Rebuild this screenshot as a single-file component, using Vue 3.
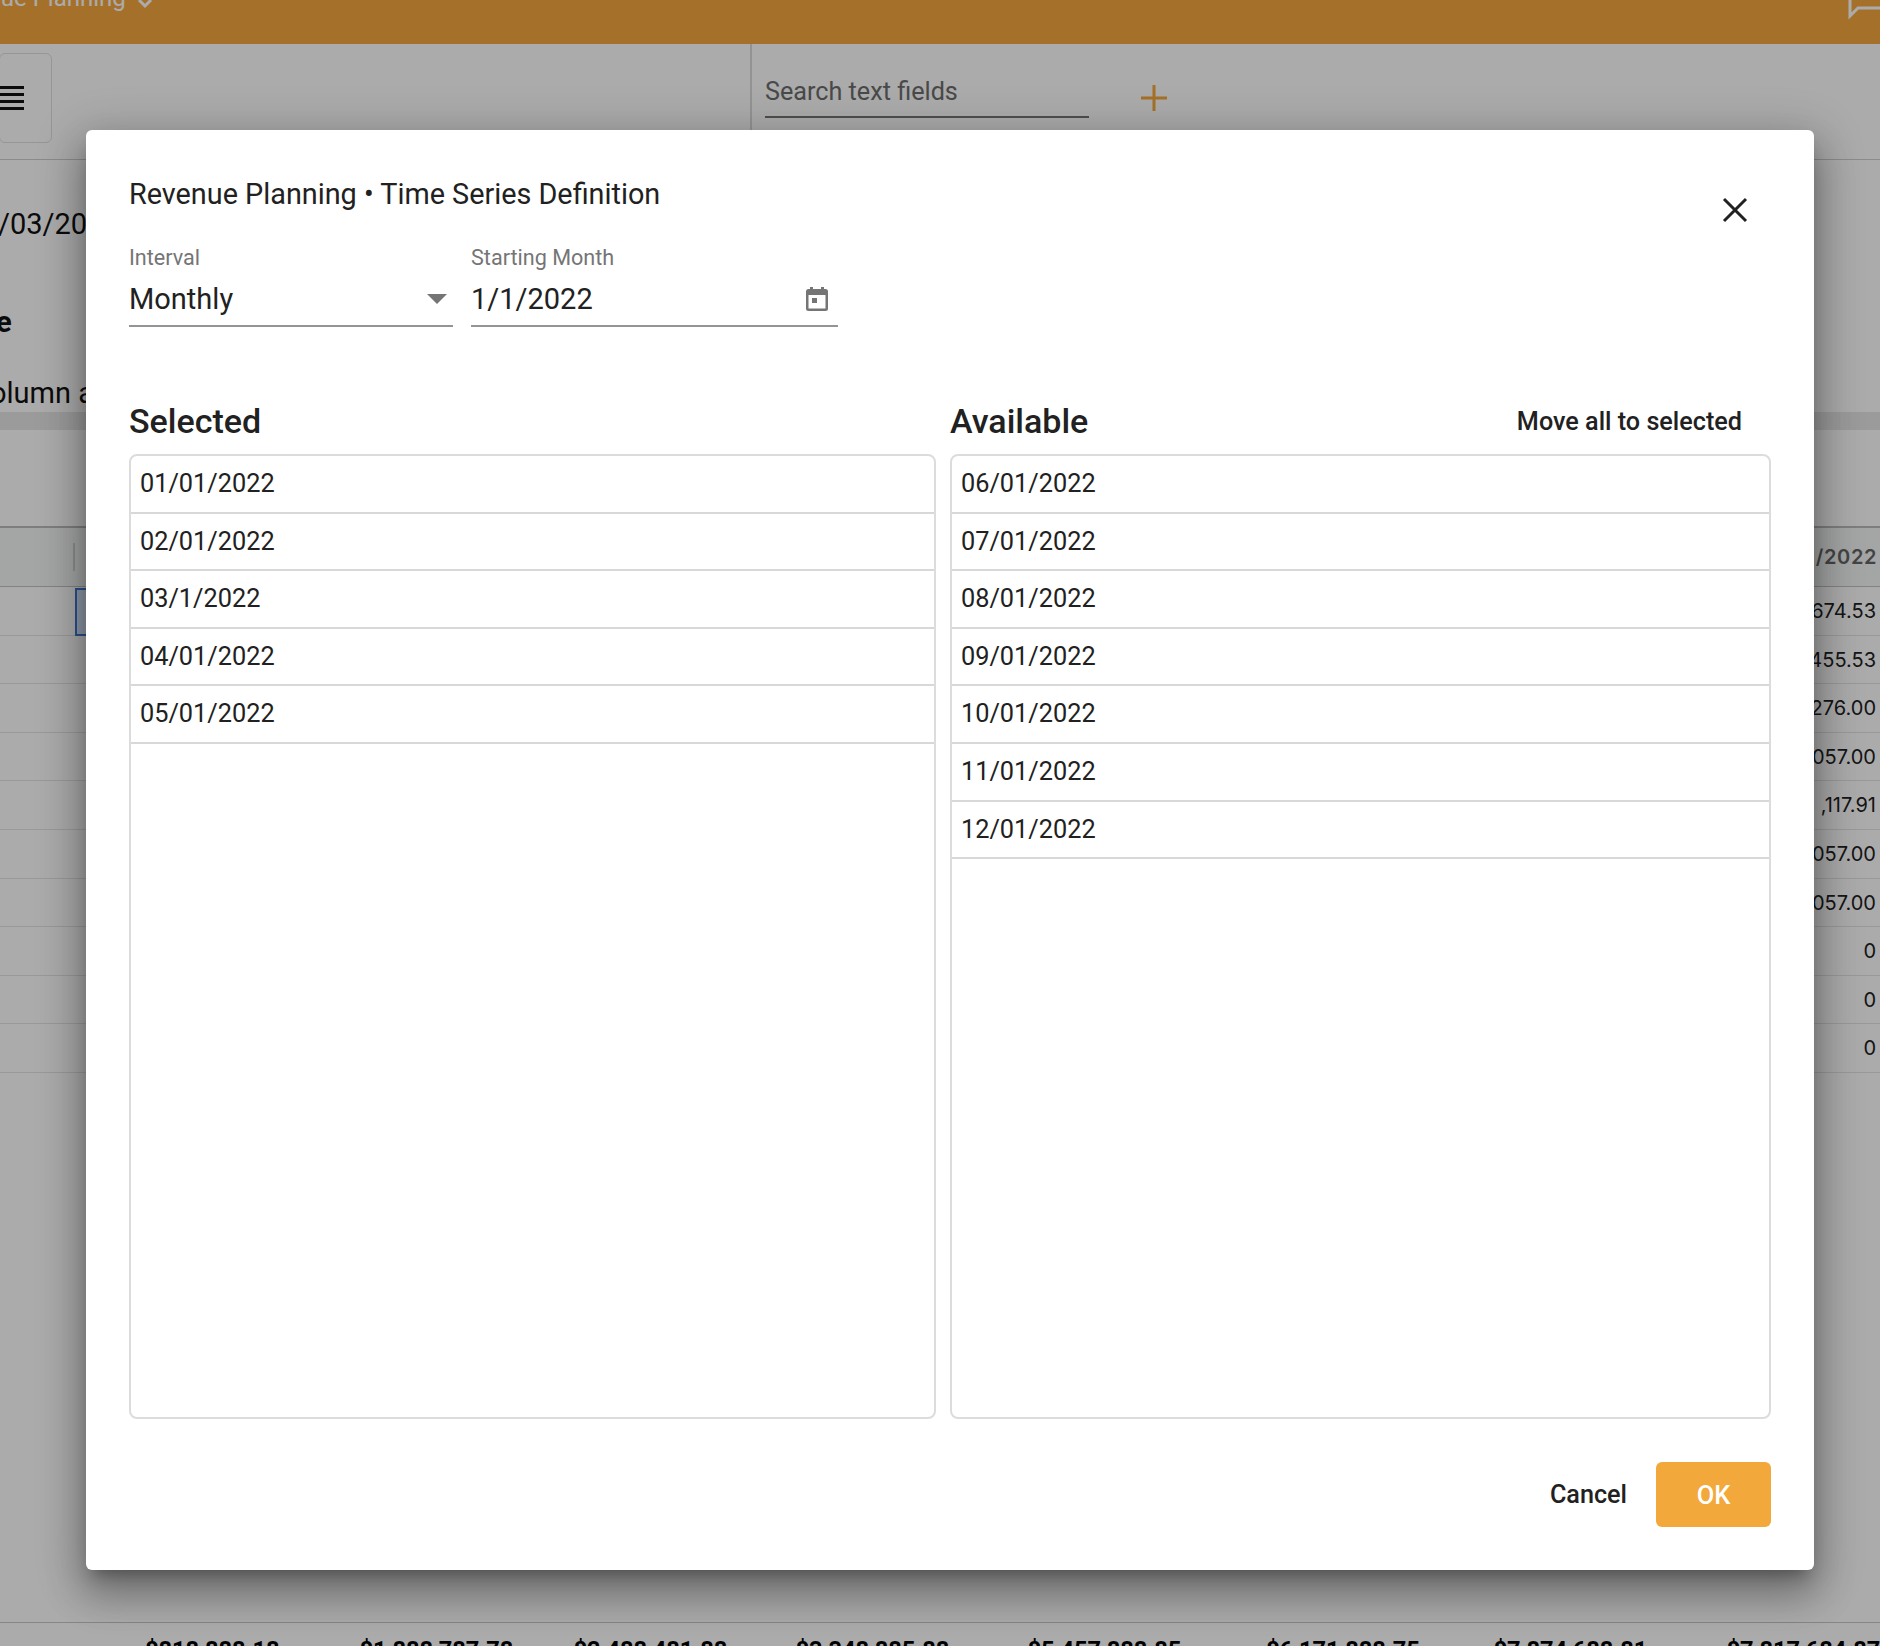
<template>
  <div class="page">
    <header class="topbar">
      <span class="topbar-title">Revenue Planning</span>
      <svg class="topbar-caret" width="16" height="10" viewBox="0 0 16 10"><path d="M2 0l6 6 6-6" fill="none" stroke="currentColor" stroke-width="3" /></svg>
      <svg class="topbar-chat" width="32" height="20" viewBox="0 0 32 20"><path d="M2 0V16L10 8H32" fill="none" stroke="currentColor" stroke-width="3" /></svg>
    </header>

    <div class="toolbar">
      <div class="menu-box">
        <span class="menu-line"></span>
        <span class="menu-line"></span>
        <span class="menu-line"></span>
        <span class="menu-line"></span>
      </div>
      <div class="search">
        <div class="search-field">Search text fields</div>
        <svg class="search-add" width="28" height="28" viewBox="0 0 28 28"><path d="M14 1v26M1 14h26" stroke="#f6a93b" stroke-width="3" /></svg>
      </div>
    </div>

    <div class="summary">
      <div class="summary-date">/03/20</div>
      <div class="summary-name">e</div>
      <div class="summary-column">olumn a</div>
    </div>
    <div class="band"></div>

    <div class="grid">
      <div class="grid-head">
        <span class="grid-sep"></span>
        <span class="grid-date">/2022</span>
      </div>
      <div v-for="(value, i) in gridValues" :key="i" class="grid-row">
        <span v-if="i === 0" class="grid-cell-active"></span>
        <span class="grid-value">{{ value }}</span>
      </div>
    </div>

    <div class="totals">
      <span v-for="total in totals" :key="total.text" class="total" :style="{ width: total.width + 'px' }">{{ total.text }}</span>
    </div>

    <div class="backdrop">
      <section class="dialog">
        <svg class="dialog-close" width="26" height="26" viewBox="0 0 26 26"><path d="M2 2l22 22M24 2L2 24" stroke="#212121" stroke-width="3" /></svg>
        <h2 class="dialog-title">Revenue Planning • Time Series Definition</h2>

        <div class="fields">
          <div class="field field-interval">
            <label class="field-label">Interval</label>
            <div class="field-input">
              <span>Monthly</span>
              <svg class="field-caret" width="20" height="10" viewBox="0 0 20 10"><path d="M0 0h20L10 10z" fill="#757575" /></svg>
            </div>
          </div>
          <div class="field field-month">
            <label class="field-label">Starting Month</label>
            <div class="field-input">
              <span>1/1/2022</span>
              <svg class="field-cal" width="24" height="26" viewBox="0 0 24 26"><path fill="#757575" fill-rule="evenodd" d="M5 1h3v2h8V1h3v2h1.500A2.500 2.500 0 0 1 23 5.500v17a2.500 2.500 0 0 1-2.500 2.500h-17A2.500 2.500 0 0 1 1 22.500v-17A2.500 2.500 0 0 1 3.500 3H5zM3.500 9v13.500h17V9zM7 12h5v5H7z" /></svg>
            </div>
          </div>
        </div>

        <div class="lists">
          <div class="list-col">
            <div class="list-head">
              <h3 class="list-title">Selected</h3>
            </div>
            <ul class="list">
              <li v-for="d in selected" :key="d" class="list-item">{{ d }}</li>
            </ul>
          </div>
          <div class="list-col">
            <div class="list-head">
              <h3 class="list-title">Available</h3>
              <button class="move-all">Move all to selected</button>
            </div>
            <ul class="list">
              <li v-for="d in available" :key="d" class="list-item">{{ d }}</li>
            </ul>
          </div>
        </div>

        <div class="actions">
          <button class="btn-cancel">Cancel</button>
          <button class="btn-ok">OK</button>
        </div>
      </section>
    </div>
  </div>
</template>

<script setup>
const selected = ['01/01/2022', '02/01/2022', '03/1/2022', '04/01/2022', '05/01/2022'];
const available = ['06/01/2022', '07/01/2022', '08/01/2022', '09/01/2022', '10/01/2022', '11/01/2022', '12/01/2022'];
const gridValues = ['674.53', '455.53', '276.00', '057.00', ',117.91', '057.00', '057.00', '0', '0', '0'];
const totals = [
  { text: '$818,888.18', width: 214.5 },
  { text: '$1,888,787.78', width: 214 },
  { text: '$2,488,481.88', width: 222 },
  { text: '$3,348,885.88', width: 232 },
  { text: '$5,457,888.85', width: 238.5 },
  { text: '$6,171,888.75', width: 227.5 },
  { text: '$7,874,688.81', width: 233 },
  { text: '$7,817,684.87', width: 230 }
];
</script>

<style>
html, body { margin: 0; overflow: hidden; background: #fff; }
</style>

<style scoped>
.page {
  position: relative;
  width: 1880px;
  height: 1646px;
  overflow: hidden;
  background: #fff;
  color: #212121;
  font-family: Roboto, "Liberation Sans", sans-serif;
}
.topbar {
  height: 44px;
  background: #f7a93f;
  color: #fff;
  display: flex;
  align-items: flex-start;
  overflow: hidden;
}
.topbar-title {
  margin-left: -64px;
  margin-top: -14px;
  font-size: 24px;
  line-height: 24px;
  white-space: nowrap;
}
.topbar-caret { margin: 0 0 0 11px; }
.topbar-chat { margin: 0 0 0 auto; }
.toolbar {
  height: 115px;
  border-bottom: 1px solid #d0d0d0;
  display: flex;
}
.menu-box {
  width: 53px;
  height: 90px;
  margin: 9px 0 0 -1px;
  border: 1px solid #e0e0e0;
  border-radius: 6px;
  box-sizing: border-box;
  display: flex;
  flex-direction: column;
  justify-content: center;
  gap: 3.5px;
}
.menu-line {
  display: block;
  width: 24px;
  height: 3.5px;
  background: #111;
}
.search {
  margin-left: 698px;
  border-left: 2px solid #dcdcdc;
  padding-left: 13px;
  display: flex;
  align-items: flex-start;
}
.search-field {
  width: 324px;
  height: 43px;
  margin-top: 29px;
  border-bottom: 2px solid #757575;
  font-size: 25.2px;
  line-height: 38px;
  color: #6e6e6e;
  white-space: nowrap;
}
.search-add { margin: 40px 0 0 51px; }
.summary {
  height: 252px;
  font-size: 29px;
  color: #111;
}
.summary-date { padding-top: 47px; line-height: 34px; margin-left: -2px; }
.summary-name { margin-top: 64px; line-height: 34px; font-weight: 700; margin-left: -4px; }
.summary-column { margin-top: 37px; line-height: 34px; margin-left: -10px; white-space: nowrap; }
.band { height: 18px; background: #e8e8e8; }
.grid {
  margin-top: 96px;
  border-top: 2px solid #bdbdbd;
}
.grid-head {
  position: relative;
  height: 58px;
  background: #f5f7f7;
  border-bottom: 1px solid #c4c4c4;
  text-align: right;
  padding-right: 3px;
  line-height: 58px;
  font-size: 20px;
  font-weight: 600;
  letter-spacing: 0.6px;
  color: #666;
  font-family: Inter, "Liberation Sans", sans-serif;
}
.grid-sep {
  position: absolute;
  left: 73px;
  top: 15px;
  width: 2px;
  height: 28px;
  background: #d4d4d4;
}
.grid-row {
  position: relative;
  height: 47.6px;
  border-bottom: 1px solid #e4e4e4;
  text-align: right;
  padding-right: 4px;
  font-size: 20px;
  line-height: 48px;
  color: #222;
  font-family: Inter, "Liberation Sans", sans-serif;
}
.grid-cell-active {
  position: absolute;
  left: 75px;
  top: 1px;
  width: 100px;
  height: 44px;
  background: #d6e6fb;
  border: 2px solid #3d7ad6;
}
.totals {
  position: absolute;
  left: 0;
  right: 0;
  top: 1622px;
  border-top: 1px solid #c8c8c8;
  padding: 13px 0 0 145px;
  display: flex;
  font-size: 23.6px;
  font-weight: 700;
  color: #000;
  white-space: nowrap;
}
.total { flex: none; }
.backdrop {
  position: absolute;
  inset: 0;
  background: rgba(0, 0, 0, 0.33);
  padding: 130px 0 0 86px;
}
.dialog {
  position: relative;
  width: 1728px;
  height: 1440px;
  box-sizing: border-box;
  padding: 44px 43px 43px;
  background: #fff;
  border-radius: 6px;
  display: flex;
  flex-direction: column;
  box-shadow: 0 11px 15px -7px rgba(0, 0, 0, 0.3), 0 24px 38px 3px rgba(0, 0, 0, 0.24), 0 9px 46px 8px rgba(0, 0, 0, 0.18);
}
.dialog-close { position: absolute; right: 66px; top: 67px; }
.dialog-title {
  margin: 0;
  font-size: 28.8px;
  font-weight: 400;
  line-height: 40px;
}
.fields {
  display: flex;
  gap: 18px;
  margin-top: 31px;
}
.field-interval { width: 324px; }
.field-month { width: 367px; }
.field-label {
  display: block;
  font-size: 21.6px;
  line-height: 26px;
  color: #757575;
}
.field-input {
  height: 49px;
  margin-top: 3px;
  display: flex;
  align-items: center;
  justify-content: space-between;
  font-size: 29px;
  line-height: 38px;
  border-bottom: 2px solid #949494;
  padding-bottom: 2px;
}
.field-caret { margin-right: 6px; }
.field-cal { margin-right: 9px; }
.lists {
  flex: 1;
  min-height: 0;
  display: flex;
  gap: 14px;
  margin-top: 70px;
}
.list-col {
  flex: none;
  width: 807px;
  display: flex;
  flex-direction: column;
}
.list-col + .list-col { width: 821px; }
.list-head {
  height: 48px;
  display: flex;
  align-items: center;
  justify-content: space-between;
}
.list-title {
  margin: 0;
  font-size: 34px;
  font-weight: 500;
  line-height: 48px;
}
.move-all {
  margin-right: 29px;
  padding: 0;
  border: 0;
  background: none;
  font: 500 25.2px Roboto, "Liberation Sans", sans-serif;
  color: #212121;
}
.list {
  flex: 1;
  margin: 9px 0 0;
  padding: 0;
  list-style: none;
  border: 2px solid #dcdcdc;
  border-radius: 8px;
}
.list-item {
  box-sizing: border-box;
  height: 57.6px;
  padding: 0 9px;
  border-bottom: 2px solid #d8d8d8;
  font-size: 25.3px;
  line-height: 56px;
}
.actions {
  display: flex;
  justify-content: flex-end;
  align-items: center;
  gap: 29px;
  margin-top: 43px;
}
.btn-cancel {
  padding: 0;
  border: 0;
  background: none;
  font: 500 25.2px Roboto, "Liberation Sans", sans-serif;
  color: #212121;
}
.btn-ok {
  width: 115px;
  height: 65px;
  border: 0;
  border-radius: 6px;
  background: #f2a83b;
  color: #fff;
  font: 500 25.5px Roboto, "Liberation Sans", sans-serif;
}
</style>
